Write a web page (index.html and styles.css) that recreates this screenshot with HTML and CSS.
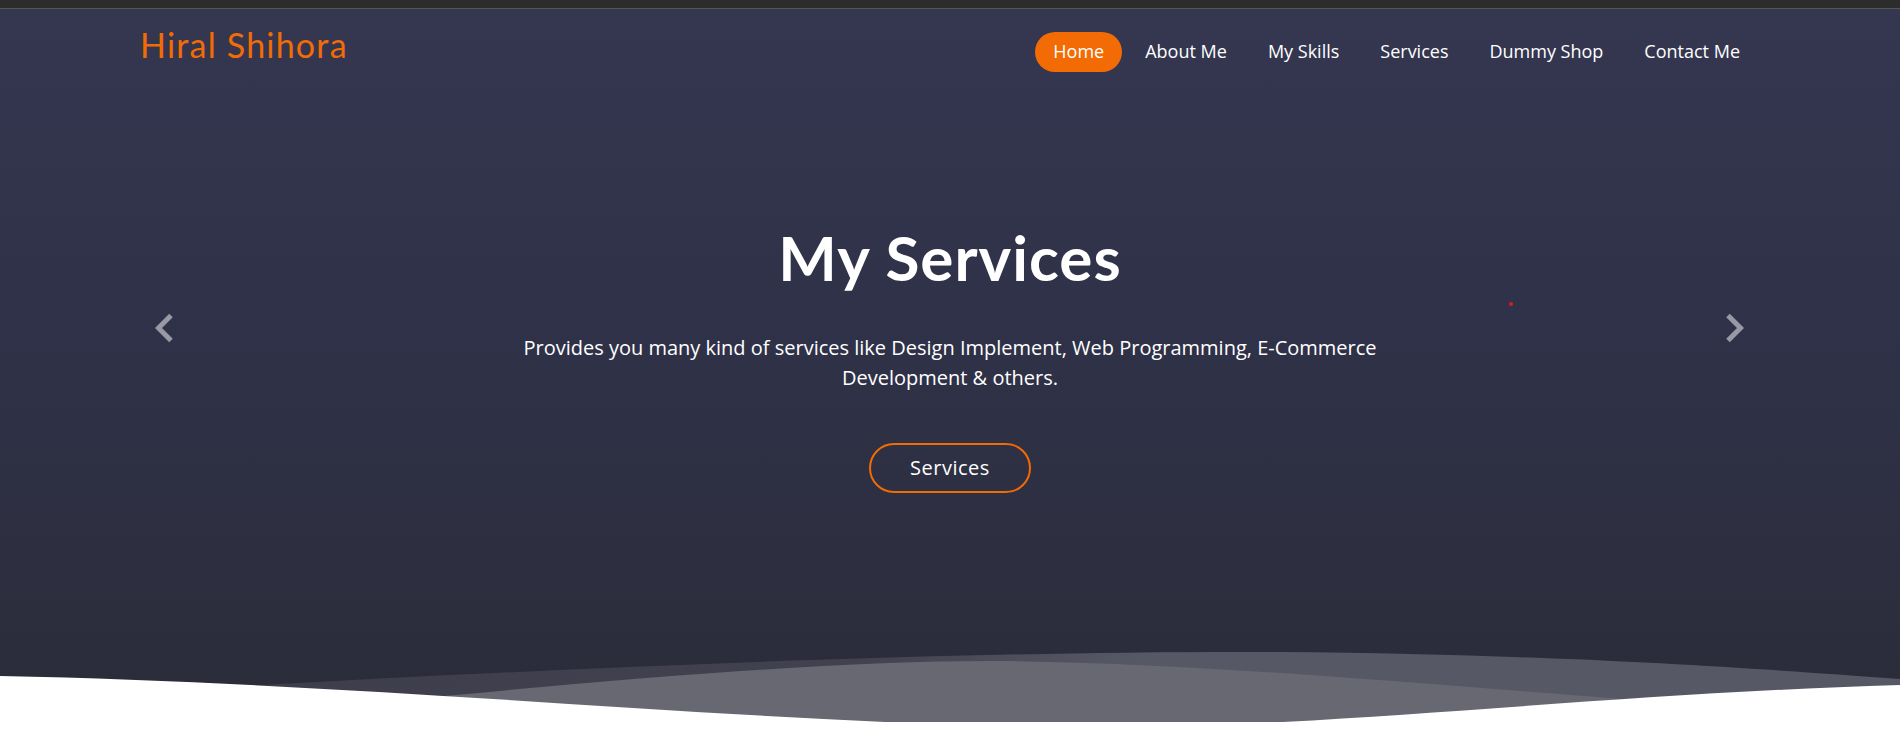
FILE: index.html
```html
<!DOCTYPE html>
<html lang="en">
<head>
<meta charset="utf-8">
<title>Hiral Shihora</title>
<link rel="stylesheet" href="styles.css">
</head>
<body>
<div class="topbar"></div>
<section class="hero">
  <header class="navbar">
    <a class="brand" href="#">Hiral Shihora</a>
    <nav class="menu">
      <a class="active" href="#">Home</a>
      <a href="#">About Me</a>
      <a href="#">My Skills</a>
      <a href="#">Services</a>
      <a href="#">Dummy Shop</a>
      <a href="#">Contact Me</a>
    </nav>
  </header>
  <div class="slide">
    <h1>My Services</h1>
    <p>Provides you many kind of services like Design Implement, Web Programming, E-Commerce Development &amp; others.</p>
    <a class="btn" href="#">Services</a>
  </div>
  <a class="ctrl prev" href="#" aria-label="Previous">
    <svg width="18" height="30" viewBox="0 0 18 30"><polyline points="16,2.5 3.5,15 16,27.5" fill="none" stroke="currentColor" stroke-width="5"/></svg>
  </a>
  <a class="ctrl next" href="#" aria-label="Next">
    <svg width="18" height="30" viewBox="0 0 18 30"><polyline points="2,2.5 14.5,15 2,27.5" fill="none" stroke="currentColor" stroke-width="5"/></svg>
  </a>
  <span class="dot"></span>
  <svg class="waves" width="1900" height="92" viewBox="0 640 1900 92" preserveAspectRatio="none">
    <defs>
      <linearGradient id="gb" x1="0" y1="0" x2="1" y2="0">
        <stop offset="0" stop-color="#3d3c4a"/>
        <stop offset="0.45" stop-color="#42414f"/>
        <stop offset="0.6" stop-color="#575865"/>
        <stop offset="1" stop-color="#575865"/>
      </linearGradient>
    </defs>
    <path fill="url(#gb)" d="M0,700 C400,676 900,650 1280,652 C1550,654 1750,668 1900,679 L1900,732 L0,732 Z"/>
    <path fill="#676871" d="M200,720 C500,690 800,660 1000,661 C1250,664 1500,692 1900,720 L1900,732 L200,732 Z"/>
    <path fill="#ffffff" d="M0,676 C400,684 750,725 1100,728 C1350,726 1600,694 1900,685 L1900,732 L0,732 Z"/>
  </svg>
</section>
</body>
</html>
```
FILE: styles.css
```css
* { box-sizing: border-box; }
html, body { margin: 0; padding: 0; background: #ffffff; }
body { font-family: "Open Sans", "Liberation Sans", sans-serif; overflow: hidden; }

.topbar {
  height: 9px;
  background: #2c2c2c;
  border-bottom: 1px solid #56584f;
}

.hero {
  position: relative;
  height: 713px;
  background: linear-gradient(180deg, #353750 0%, #30324a 40%, #2b2c39 100%);
}

.navbar {
  width: 1650px;
  margin: 0 auto;
  padding: 23px 17px 0 15px;
  display: flex;
  justify-content: space-between;
  align-items: flex-start;
}

.brand {
  margin-top: -4px;
  font-family: Lato, "Open Sans", sans-serif;
  font-size: 34px;
  line-height: 34px;
  letter-spacing: 1.2px;
  color: #f26b05;
  text-decoration: none;
}

.menu {
  display: flex;
  gap: 5px;
}

.menu a {
  display: block;
  padding: 0 18px;
  height: 40px;
  line-height: 39px;
  border-radius: 20px;
  font-size: 18px;
  color: #ffffff;
  text-decoration: none;
}

.menu a.active { background: #f26b05; }

.slide {
  margin-top: 148px;
  text-align: center;
  color: #ffffff;
}

.slide h1 {
  margin: 0;
  font-family: Lato, "Open Sans", sans-serif;
  font-weight: 700;
  font-size: 62px;
  line-height: 74px;
  letter-spacing: 1px;
}

.slide p {
  max-width: 900px;
  margin: 39px auto 0;
  font-size: 20px;
  line-height: 30px;
}

.btn {
  display: inline-block;
  margin-top: 50px;
  width: 162px;
  height: 50px;
  line-height: 46px;
  border: 2px solid #f26b05;
  border-radius: 25px;
  font-size: 20px;
  letter-spacing: 0.5px;
  color: #ffffff;
  text-decoration: none;
}

.ctrl {
  position: absolute;
  top: 304px;
  color: #9899a5;
  line-height: 0;
}
.ctrl.prev { left: 155px; }
.ctrl.next { left: 1726px; }

.dot {
  position: absolute;
  left: 1509px;
  top: 293px;
  width: 4px;
  height: 4px;
  border-radius: 50%;
  background: #e3171b;
}

.waves {
  position: absolute;
  left: 0;
  top: 631px;
  display: block;
}
```
